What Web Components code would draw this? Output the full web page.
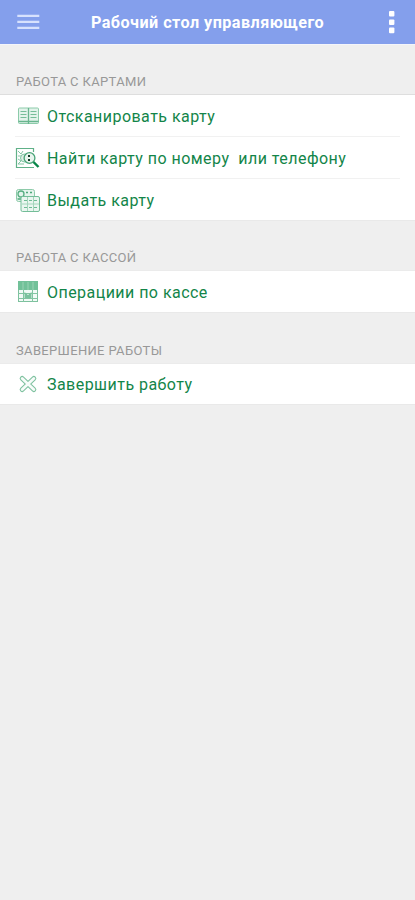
<!DOCTYPE html>
<html lang="ru">
<head>
<meta charset="utf-8">
<title>Рабочий стол управляющего</title>
<style>
  body {
    margin: 0;
    min-height: 900px;
    background: #efefef;
    font-family: Roboto, "Noto Sans", sans-serif;
  }
</style>
</head>
<body>
<app-bar>Рабочий стол управляющего</app-bar>
<menu-section label="Работа с картами" style="--line: #dedede">
  <menu-row icon="book">Отсканировать карту</menu-row>
  <menu-row icon="search">Найти карту по номеру&nbsp; или телефону</menu-row>
  <menu-row icon="cards">Выдать карту</menu-row>
</menu-section>
<menu-section label="Работа с кассой">
  <menu-row icon="cash">Операциии по кассе</menu-row>
</menu-section>
<menu-section label="Завершение работы" style="--head: 52px; --last-row: 40px">
  <menu-row icon="close">Завершить работу</menu-row>
</menu-section>

<script>
const icons = {
  book: `
    <rect x="3.5" y="4" width="20" height="15.5" rx="1" fill="#e3f3eb" stroke="#8ccbaa"/>
    <path d="M13.5 4v16M3.5 17.5h20" stroke="#68b58e" stroke-width="1.3"/>
    <path d="M5.5 7.5h6M5.5 10.5h6M5.5 13.5h6M15.5 7.5h6M15.5 10.5h6M15.5 13.5h6" stroke="#76bd98"/>`,
  search: `
    <path d="M18.5 2.5H1M1.5 2v19.5H19M18.5 2v4" stroke="#60b188" stroke-width="1.2"/>
    <path d="M3 5l3 3 2-3M3 10h5M3 13l3 2-3 3h6" stroke="#83c5a4"/>
    <circle cx="9.5" cy="12" r="4" fill="#dceee4" stroke="#83c5a4"/>
    <circle cx="14.5" cy="12" r="5.4" fill="#e8f5ee" stroke="#48a477" stroke-width="1.3"/>
    <path d="M18.5 16l5 5" stroke="#078548" stroke-width="2.4"/>
    <path d="M14 9v2M14 13v2" stroke="#173f2b" stroke-width="2"/>`,
  cards: `
    <rect x="1.5" y="1.5" width="18" height="12" rx="2" fill="#e4f4ec" stroke="#8ecbaa"/>
    <circle cx="6" cy="6" r="3" stroke="#55ad80" stroke-width="1.3"/>
    <path d="M11 4.5h2M15 4.5h2M2.5 11h5" stroke="#4ca87a" stroke-width="1.5"/>
    <rect x="6" y="8.5" width="18.5" height="15" rx="1.5" fill="#eaf6f0" stroke="#73bd98"/>
    <path d="M9 12.5h3M14 12.5h3M19 12.5h3M9 19.5h3M14 19.5h3M19 19.5h3" stroke="#6ebb94"/>
    <path d="M7 16h17M12.5 9v14M18.5 9v14" stroke="#a4d6bc"/>`,
  cash: `
    <rect x="3.5" y="1.5" width="19" height="20" fill="#f2faf6" stroke="#7dc19e"/>
    <path d="M3 1h20v9H3z" fill="#72c199"/>
    <path d="M8 2v8M13 2v8M18 2v8" stroke="#9ad3b5"/>
    <path d="M8.5 10v12M17.5 10v12M3 13.5h20M3 18.5h20" stroke="#82c5a2"/>
    <path d="M9.5 12l3.5 3 3.5-3v6h-7z" fill="#7bc29e"/>`,
  close: `
    <g stroke-linecap="round">
      <path d="M7.2 6.5l11.6 11M18.8 6.5l-11.6 11" stroke="#7fc2a0" stroke-width="5"/>
      <path d="M7.2 6.5l11.6 11M18.8 6.5l-11.6 11" stroke="#f8fcfa" stroke-width="2.8"/>
    </g>`
};

class AppBar extends HTMLElement {
  constructor() {
    super();
    this.attachShadow({mode: 'open'}).innerHTML = `
    <style>
    :host {
      display: grid;
      grid-template-columns: 23px 1fr 23px;
      align-items: center;
      height: 44px;
      box-sizing: border-box;
      padding: 0 17px;
      background: #849fec;
      box-shadow: 0 1px #f4f5fa;
      color: #fff;
    }
    .title {
      font-size: 16.2px;
      font-weight: bold;
      letter-spacing: .45px;
      line-height: 20px;
      padding-top: 2px;
      text-align: center;
      white-space: nowrap;
    }
    svg {
      display: block;
      width: 23px;
      height: 24px;
    }
    .more {
      width: 16px;
      justify-self: end;
    }
    </style>
    <svg viewBox="0 0 23 24"><path d="M.3 5.8h22M.3 11.8h22M.3 17.8h22" stroke="#d7e1fd" stroke-width="2.3"/></svg>
    <div class="title"><slot></slot></div>
    <svg class="more" viewBox="0 0 16 24" fill="#fff">
      <rect x="7" y="1" width="5.4" height="5.6" rx="1"/>
      <rect x="7" y="9.5" width="5.4" height="5.6" rx="1"/>
      <rect x="7" y="17.6" width="5.4" height="5.6" rx="1"/>
    </svg>`;
  }
}

class MenuSection extends HTMLElement {
  constructor() {
    super();
    this.attachShadow({mode: 'open'}).innerHTML = `
    <style>
    :host { display: block; }
    .label {
      display: flex;
      align-items: flex-end;
      height: var(--head, 51px);
      box-sizing: border-box;
      padding: 0 16px 5px;
      color: #989898;
      font-size: 13px;
      letter-spacing: .34px;
      line-height: 16px;
      text-transform: uppercase;
    }
    .rows {
      background: #fff;
      box-shadow: 0 -1px var(--line, #ebebeb), 0 1px #e9e9e9;
    }
    </style>
    <div class="label">${this.getAttribute('label')}</div>
    <div class="rows"><slot></slot></div>`;
  }
}

class MenuRow extends HTMLElement {
  constructor() {
    super();
    this.attachShadow({mode: 'open'}).innerHTML = `
    <style>
    :host {
      display: flex;
      align-items: center;
      height: 42px;
      box-sizing: border-box;
      margin: 0 15px;
      padding-top: 2px;
      border-bottom: 1px solid #f1f1f1;
      color: #138549;
      font-size: 16px;
      letter-spacing: .46px;
      line-height: 20px;
      white-space: nowrap;
    }
    :host(:last-child) {
      height: var(--last-row, 41px);
      border-bottom: 0;
    }
    svg {
      width: 26px;
      height: 26px;
      margin-right: 6px;
    }
    </style>
    <svg viewBox="0 0 26 26" fill="none">${icons[this.getAttribute('icon')]}</svg>
    <span><slot></slot></span>`;
  }
}

customElements.define('app-bar', AppBar);
customElements.define('menu-section', MenuSection);
customElements.define('menu-row', MenuRow);
</script>
</body>
</html>
